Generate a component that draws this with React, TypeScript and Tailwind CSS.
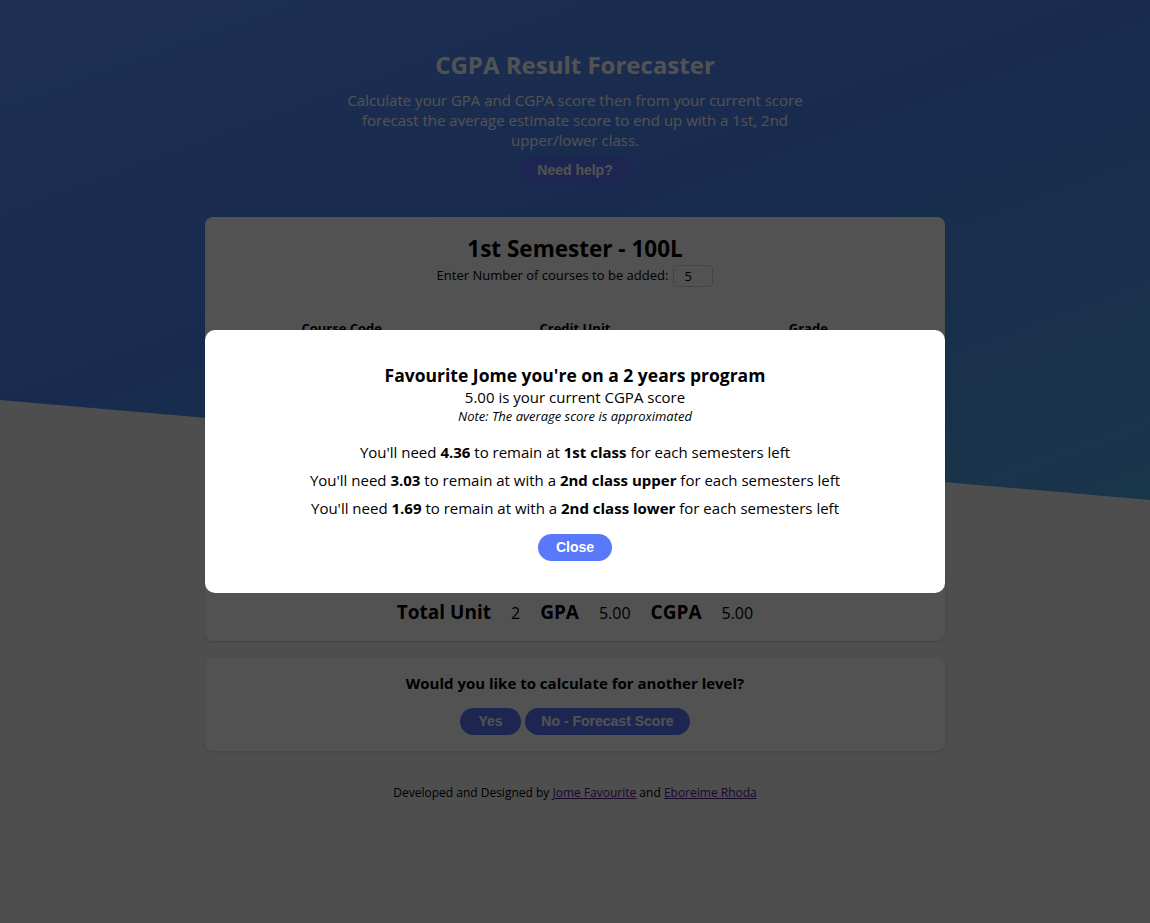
import { useState } from "react";

const courses = [
  { code: "", unit: "", grade: "" },
  { code: "", unit: "", grade: "" },
  { code: "", unit: "", grade: "" },
  { code: "", unit: "", grade: "" },
  { code: "", unit: "", grade: "" },
];

function PillButton({ children, className = "" }: { children: React.ReactNode; className?: string }) {
  return (
    <button
      className={`rounded-full bg-[#5a78fa] text-white font-bold text-[14px] leading-[27px] h-[27px] font-['Liberation_Sans',Arial,sans-serif] ${className}`}
    >
      {children}
    </button>
  );
}

export default function App() {
  const [open] = useState(true);

  return (
    <div className="relative min-h-screen bg-[#f1f1f1] font-['Open_Sans',sans-serif] text-black overflow-hidden">
      {/* skewed gradient backdrop */}
      <div className="absolute inset-x-0 top-0 h-[500px] bg-[linear-gradient(160deg,#5a95ff_0%,#4d86f2_45%,#4fa6e6_100%)] [clip-path:polygon(0_0,100%_0,100%_100%,0_80%)]" />

      <div className="relative flex flex-col items-center">
        <h1 className="mt-[49px] text-[24px] leading-8 font-bold text-white">CGPA Result Forecaster</h1>
        <p className="mt-[9px] w-[470px] text-center text-[15px] leading-5 text-white">
          Calculate your GPA and CGPA score then from your current score forecast the average estimate score to end up with a 1st, 2nd upper/lower class.
        </p>
        <PillButton className="mt-[7px] px-[19px] bg-[#4e57e6]">Need help?</PillButton>

        <div className="mt-[33px] w-[740px] rounded-lg bg-white px-5 pt-4 pb-[14px] shadow">
          <h2 className="text-center text-[22.5px] leading-8 font-bold">1st Semester - 100L</h2>
          <div className="flex items-center justify-center gap-[5px] text-[13px] h-[22px]">
            <span>Enter Number of courses to be added:</span>
            <input
              readOnly
              value="5"
              className="w-[40px] h-[22px] rounded border border-gray-300 px-[10px] text-[13px]"
            />
          </div>

          <div className="mt-8 grid grid-cols-3 text-center text-[13px] leading-[18px] font-bold">
            <div>Course Code</div>
            <div>Credit Unit</div>
            <div>Grade</div>
          </div>
          <div className="h-[261px] pt-3 flex flex-col gap-3">
            {courses.map((c, i) => (
              <div key={i} className="grid grid-cols-3 gap-4 px-6">
                <input readOnly value={c.code} className="h-7 border border-gray-300 rounded" />
                <input readOnly value={c.unit} className="h-7 border border-gray-300 rounded" />
                <input readOnly value={c.grade} className="h-7 border border-gray-300 rounded" />
              </div>
            ))}
          </div>

          <div className="flex items-baseline justify-center gap-5 leading-7">
            <span className="text-[19px] font-bold">Total Unit</span>
            <span className="text-[16px]">2</span>
            <span className="text-[19px] font-bold">GPA</span>
            <span className="text-[16px]">5.00</span>
            <span className="text-[19px] font-bold">CGPA</span>
            <span className="text-[16px]">5.00</span>
          </div>
        </div>

        <div className="mt-4 w-[740px] rounded-lg bg-white pt-4 pb-4 shadow text-center">
          <p className="text-[15px] leading-5 font-bold">Would you like to calculate for another level?</p>
          <div className="mt-[15px] flex justify-center gap-1">
            <PillButton className="w-[61px]">Yes</PillButton>
            <PillButton className="w-[165px]">No - Forecast Score</PillButton>
          </div>
        </div>

        <p className="mt-[34px] text-[12px] leading-4">
          Developed and Designed by{" "}
          <a href="#" className="underline text-[#551a8b]">Jome Favourite</a> and{" "}
          <a href="#" className="underline text-[#551a8b]">Eboreime Rhoda</a>
        </p>
      </div>

      {open && (
        <div className="fixed inset-0 bg-black/[0.68] flex justify-center items-start pt-[330px]">
          <div className="w-[740px] rounded-[10px] bg-white pt-[33px] pb-[32px] text-center">
            <h3 className="text-[17.5px] leading-6 font-bold">Favourite Jome you're on a 2 years program</h3>
            <p className="text-[15px] leading-5">5.00 is your current CGPA score</p>
            <p className="text-[13px] leading-[18px] italic">Note: The average score is approximated</p>
            <div className="mt-[17px] flex flex-col gap-2 text-[15px] leading-5">
              <p>
                You'll need <b>4.36</b> to remain at <b>1st class</b> for each semesters left
              </p>
              <p>
                You'll need <b>3.03</b> to remain at with a <b>2nd class upper</b> for each semesters left
              </p>
              <p>
                You'll need <b>1.69</b> to remain at with a <b>2nd class lower</b> for each semesters left
              </p>
            </div>
            <PillButton className="mt-4 w-[74px]">Close</PillButton>
          </div>
        </div>
      )}
    </div>
  );
}
